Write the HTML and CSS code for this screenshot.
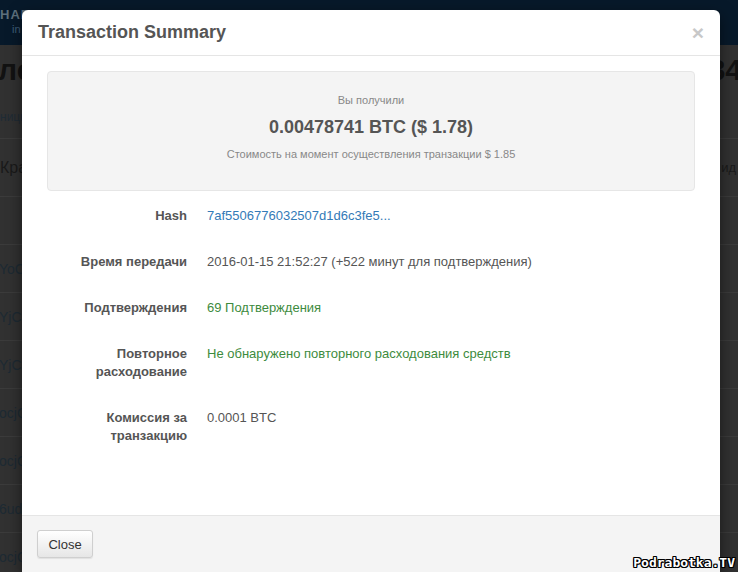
FILE: index.html
```html
<!DOCTYPE html>
<html lang="ru">
<head>
<meta charset="utf-8">
<title>Transaction Summary</title>
<link rel="stylesheet" href="styles.css">
</head>
<body>
<div class="page">
  <div class="navbar">
    <div class="brand">
      <span class="brand-main">НАГ</span>
      <span class="brand-sub">in</span>
    </div>
  </div>
  <div class="title-row">
    <span class="big">ле</span>
    <span class="big">34</span>
  </div>
  <div class="sub-row">
    <span class="dim">ницы</span>
  </div>
  <div class="head-row">
    <span class="th">Кра</span>
    <span class="th">ид</span>
  </div>
  <div class="trow"></div>
  <div class="trow"><span class="cell">YoC</span></div>
  <div class="trow"><span class="cell">YjC</span></div>
  <div class="trow"><span class="cell">YjC</span></div>
  <div class="trow"><span class="cell">ocjQ</span></div>
  <div class="trow"><span class="cell">ocjQ</span></div>
  <div class="trow"><span class="cell">6ud</span></div>
  <div class="trow"><span class="cell">ocjQ</span></div>
</div>

<div class="modal">
  <div class="modal-header">
    <h4 class="modal-title">Transaction Summary</h4>
    <span class="close">×</span>
  </div>
  <div class="modal-body">
    <div class="summary">
      <div class="summary-label">Вы получили</div>
      <div class="summary-amount">0.00478741 BTC ($ 1.78)</div>
      <div class="summary-note">Стоимость на момент осуществления транзакции $ 1.85</div>
    </div>
    <div class="details">
      <div class="label">Hash</div>
      <div class="value"><a class="link" href="#">7af5506776032507d1d6c3fe5...</a></div>
      <div class="label">Время передачи</div>
      <div class="value">2016-01-15 21:52:27 (+522 минут для подтверждения)</div>
      <div class="label">Подтверждения</div>
      <div class="value green">69 Подтверждения</div>
      <div class="label">Повторное расходование</div>
      <div class="value green">Не обнаружено повторного расходования средств</div>
      <div class="label">Комиссия за транзакцию</div>
      <div class="value">0.0001 BTC</div>
    </div>
  </div>
  <div class="modal-footer">
    <button class="btn" type="button">Close</button>
  </div>
</div>

<div class="watermark">Podrabotka.TV</div>
</body>
</html>
```
FILE: styles.css
```css
html, body {
  margin: 0;
  padding: 0;
}
body {
  width: 738px;
  height: 572px;
  overflow: hidden;
  background: #313131;
  font-family: "Liberation Sans", Arial, sans-serif;
  position: relative;
}

/* dimmed page behind the modal */
.page {
  display: flex;
  flex-direction: column;
}
.navbar {
  height: 45px;
  background: #07192a;
}
.brand {
  display: flex;
  flex-direction: column;
  padding: 9px 0 0 0;
  line-height: 12px;
}
.brand-main {
  font-size: 13px;
  font-weight: bold;
  color: #5d6f7c;
  letter-spacing: 1px;
}
.brand-sub {
  font-size: 11px;
  color: #3f5f7a;
  padding-left: 12px;
  margin-top: 2px;
}
.title-row {
  height: 50px;
  display: flex;
  justify-content: space-between;
  align-items: center;
}
.big {
  font-size: 30px;
  font-weight: bold;
  color: #121212;
  margin-left: -2px;
}
.title-row .big:last-child {
  margin-right: -4px;
}
.sub-row {
  height: 43px;
  display: flex;
  align-items: center;
}
.dim {
  font-size: 12px;
  color: #1f2b35;
}
.head-row {
  height: 57px;
  border-top: 1px solid #3b3b3b;
  display: flex;
  justify-content: space-between;
  align-items: center;
}
.th {
  font-size: 16px;
  color: #1a1a1a;
}
.th:last-child {
  font-size: 13px;
  margin-right: 2px;
}
.trow {
  height: 47px;
  border-top: 1px solid #3b3b3b;
  display: flex;
  align-items: center;
}
.cell {
  font-size: 14px;
  color: #1d2a33;
  margin-left: -1px;
}

/* modal */
.modal {
  position: absolute;
  left: 22px;
  top: 10px;
  width: 698px;
  background: #fff;
  border-radius: 6px 6px 0 0;
  box-shadow: 0 5px 15px rgba(0, 0, 0, 0.5);
  display: flex;
  flex-direction: column;
}
.modal-header {
  height: 45px;
  border-bottom: 1px solid #e5e5e5;
  display: flex;
  align-items: center;
  justify-content: space-between;
  padding: 0 16px;
}
.modal-title {
  margin: 0;
  font-size: 18px;
  font-weight: bold;
  color: #555;
  line-height: 25px;
}
.close {
  font-size: 21px;
  font-weight: bold;
  color: #c8c8c8;
  line-height: 1;
}
.modal-body {
  height: 460px;
  box-sizing: border-box;
  padding: 15px 25px 0;
  border-bottom: 1px solid #e5e5e5;
}
.summary {
  height: 120px;
  box-sizing: border-box;
  background: #f4f4f4;
  border: 1px solid #e6e6e6;
  border-radius: 4px;
  padding: 19px 10px 0;
  text-align: center;
  color: #888;
}
.summary-label {
  font-size: 11px;
  line-height: 18px;
}
.summary-amount {
  font-size: 18px;
  font-weight: bold;
  color: #555;
  line-height: 24px;
  margin-top: 6px;
}
.summary-note {
  font-size: 11px;
  line-height: 18px;
  margin-top: 6px;
}
.details {
  display: grid;
  grid-template-columns: 140px 1fr;
  column-gap: 20px;
  row-gap: 28px;
  margin-top: 16px;
  font-size: 13px;
  line-height: 18px;
  color: #555;
}
.label {
  text-align: right;
  font-weight: bold;
}
.link {
  color: #337ab7;
  text-decoration: none;
}
.green {
  color: #3d8b3d;
}
.modal-footer {
  background: #f4f4f4;
  padding: 14px 15px 15px;
}
.btn {
  font-family: "Liberation Sans", Arial, sans-serif;
  font-size: 13px;
  color: #333;
  height: 28px;
  width: 56px;
  padding: 0;
  border: 1px solid #cfcfcf;
  border-radius: 3px;
  background: linear-gradient(#ffffff, #e6e6e6);
  box-shadow: 0 1px 1px rgba(0, 0, 0, 0.08);
}

.watermark {
  position: absolute;
  right: 3px;
  bottom: 2px;
  font-family: "DejaVu Sans Mono", monospace;
  font-weight: bold;
  font-size: 13px;
  line-height: 14px;
  color: #fff;
  text-shadow: -1px 0 #000, 1px 0 #000, 0 -1px #000, 0 1px #000,
    -1px -1px #000, 1px 1px #000, -1px 1px #000, 1px -1px #000;
}
```
